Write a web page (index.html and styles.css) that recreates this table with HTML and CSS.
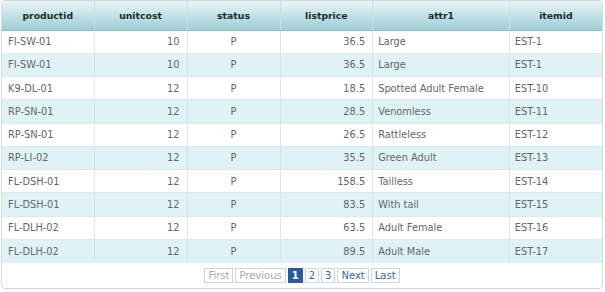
FILE: index.html
```html
<!DOCTYPE html>
<html>
<head>
<meta charset="utf-8">
<link rel="stylesheet" href="styles.css">
</head>
<body>
<div class="grid">
  <table class="data">
    <colgroup>
      <col class="c1"><col class="c2"><col class="c3"><col class="c4"><col class="c5"><col class="c6">
    </colgroup>
    <thead>
      <tr>
        <th>productid</th><th>unitcost</th><th>status</th><th>listprice</th><th>attr1</th><th>itemid</th>
      </tr>
    </thead>
    <tbody>
      <tr><td>FI-SW-01</td><td class="r">10</td><td class="c">P</td><td class="r">36.5</td><td>Large</td><td>EST-1</td></tr>
      <tr class="alt"><td>FI-SW-01</td><td class="r">10</td><td class="c">P</td><td class="r">36.5</td><td>Large</td><td>EST-1</td></tr>
      <tr><td>K9-DL-01</td><td class="r">12</td><td class="c">P</td><td class="r">18.5</td><td>Spotted Adult Female</td><td>EST-10</td></tr>
      <tr class="alt"><td>RP-SN-01</td><td class="r">12</td><td class="c">P</td><td class="r">28.5</td><td>Venomless</td><td>EST-11</td></tr>
      <tr><td>RP-SN-01</td><td class="r">12</td><td class="c">P</td><td class="r">26.5</td><td>Rattleless</td><td>EST-12</td></tr>
      <tr class="alt"><td>RP-LI-02</td><td class="r">12</td><td class="c">P</td><td class="r">35.5</td><td>Green Adult</td><td>EST-13</td></tr>
      <tr><td>FL-DSH-01</td><td class="r">12</td><td class="c">P</td><td class="r">158.5</td><td>Tailless</td><td>EST-14</td></tr>
      <tr class="alt"><td>FL-DSH-01</td><td class="r">12</td><td class="c">P</td><td class="r">83.5</td><td>With tail</td><td>EST-15</td></tr>
      <tr><td>FL-DLH-02</td><td class="r">12</td><td class="c">P</td><td class="r">63.5</td><td>Adult Female</td><td>EST-16</td></tr>
      <tr class="alt"><td>FL-DLH-02</td><td class="r">12</td><td class="c">P</td><td class="r">89.5</td><td>Adult Male</td><td>EST-17</td></tr>
    </tbody>
  </table>
  <div class="pager">
    <span class="pg disabled">First</span>
    <span class="pg disabled">Previous</span>
    <span class="pg current">1</span>
    <span class="pg">2</span>
    <span class="pg">3</span>
    <span class="pg">Next</span>
    <span class="pg">Last</span>
  </div>
</div>
</body>
</html>
```
FILE: styles.css
```css
html, body {
  margin: 0;
  padding: 0;
  background: #ffffff;
}
body {
  font-family: "DejaVu Sans", Verdana, sans-serif;
}
.grid {
  width: 600px;
  margin-left: 1px;
  border: 1px solid #d6d9da;
  border-radius: 4px;
  overflow: hidden;
  background: #fff;
}
.data {
  width: 100%;
  border-collapse: collapse;
  table-layout: fixed;
}
.c1 { width: 92px; }
.c2 { width: 93px; }
.c3 { width: 93px; }
.c4 { width: 92.7px; }
.c5 { width: 136.6px; }
.c6 { width: auto; }
.data thead tr {
  height: 29px;
}
.data th {
  padding: 0 4px;
  font-size: 9.3px;
  font-weight: bold;
  color: #1e2a2c;
  text-align: center;
  background: linear-gradient(#e8f4f6 0%, #c6e3e8 45%, #9fcdd6 100%);
  border-left: 1px solid #c9dfe3;
  border-bottom: 1px solid #86bcc6;
}
.data th:first-child { border-left: none; }
.data tbody tr {
  height: 23.27px;
}
.data td {
  padding: 0 5px;
  font-size: 9.8px;
  color: #666;
  border-left: 1px solid #e3e6e7;
  border-bottom: 1px solid #dfe8ea;
  white-space: nowrap;
  vertical-align: middle;
}
.data td:first-child { border-left: none; padding-left: 6px; }
.data tr.alt td {
  background: #dff2f5;
  border-left-color: #d3e4e7;
}
.data tr.alt td:first-child { border-left: none; }
.data tbody tr:last-child td { border-bottom: 1px solid #e6eaeb; }
.data td.r { text-align: right; padding-right: 7px; }
.data td.c { text-align: center; }
.pager {
  display: flex;
  justify-content: center;
  gap: 2px;
  padding: 5px 0 5px 0;
}
.pg {
  display: inline-flex;
  align-items: center;
  height: 13px;
  padding: 0 3px;
  border: 1px solid #c8d7ea;
  font-size: 10px;
  color: #3b64a6;
  background: #fff;
  line-height: 13px;
}
.pg.disabled {
  border-color: #d2d2d2;
  color: #a8a8a8;
}
.pg.current {
  background: #2a5aa3;
  border-color: #2a5aa3;
  color: #fff;
  font-weight: bold;
}
```
